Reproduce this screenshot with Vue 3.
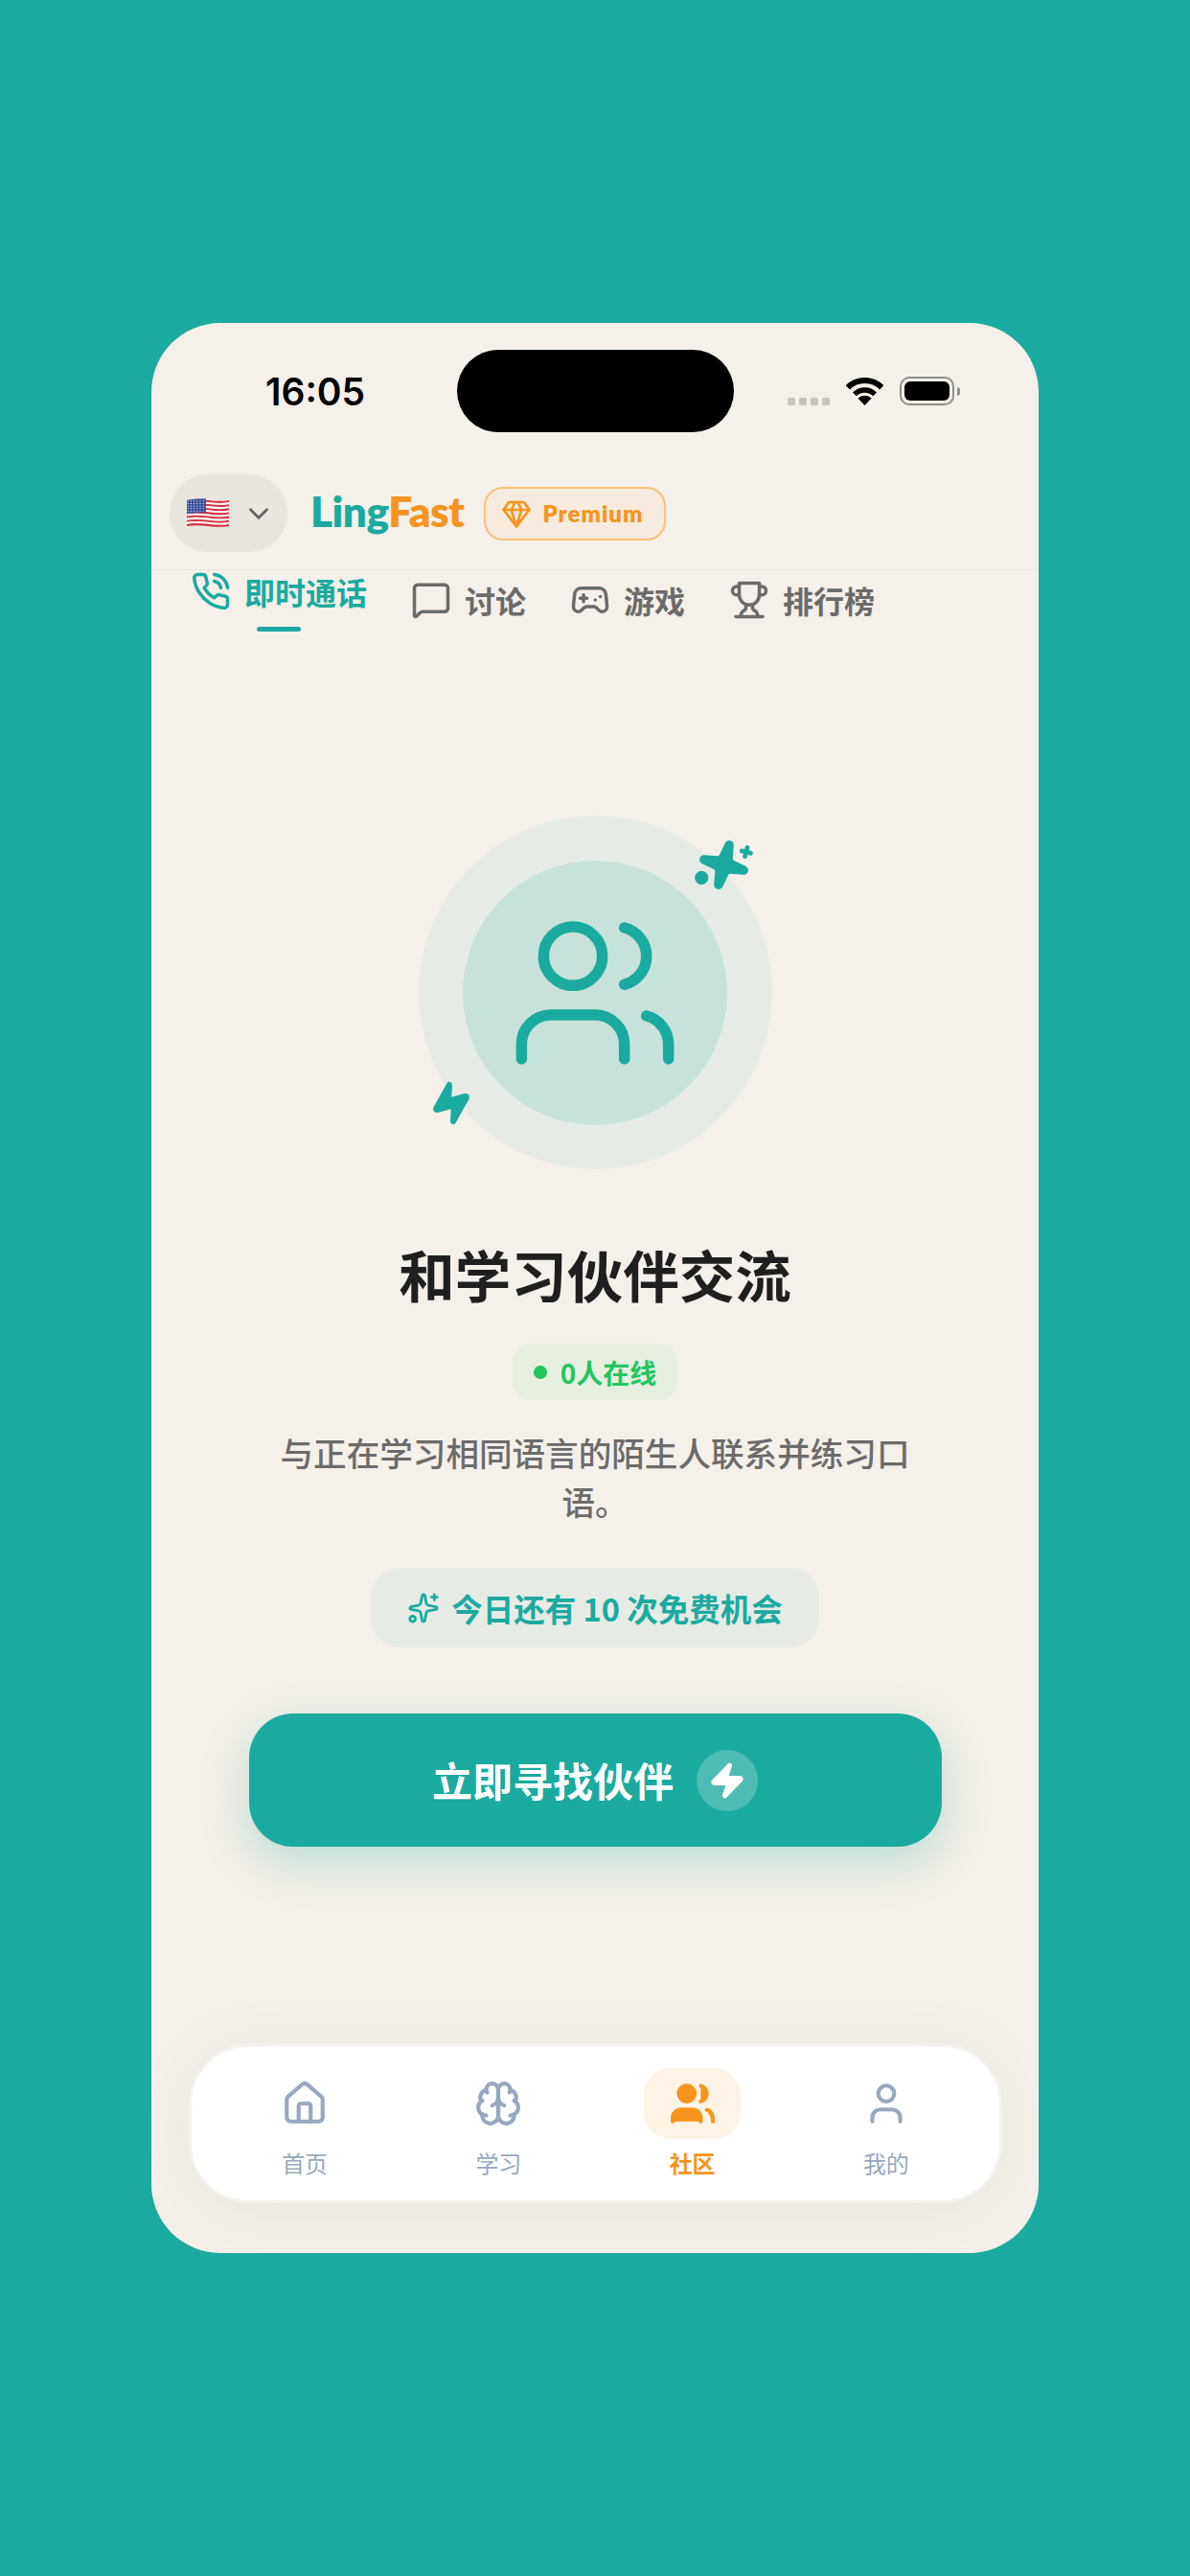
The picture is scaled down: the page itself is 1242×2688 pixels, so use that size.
<script setup>
// lucide paths, circles written as arcs so every icon is just a list of d strings
const icons = {
  phone: [
    'M22 16.92v3a2 2 0 0 1-2.18 2 19.79 19.79 0 0 1-8.63-3.07 19.5 19.5 0 0 1-6-6 19.79 19.79 0 0 1-3.07-8.67A2 2 0 0 1 4.11 2h3a2 2 0 0 1 2 1.72 12.84 12.84 0 0 0 .7 2.81 2 2 0 0 1-.45 2.11L8.09 9.91a16 16 0 0 0 6 6l1.27-1.27a2 2 0 0 1 2.11-.45 12.84 12.84 0 0 0 2.81.7A2 2 0 0 1 22 16.92z',
    'M14.05 2a9 9 0 0 1 8 7.94',
    'M14.05 6A5 5 0 0 1 18 10'
  ],
  message: [
    'M22 17a2 2 0 0 1-2 2H6.828a2 2 0 0 0-1.414.586l-2.202 2.202A.71.71 0 0 1 2 21.286V5a2 2 0 0 1 2-2h16a2 2 0 0 1 2 2z'
  ],
  gamepad: [
    'M6 11h4',
    'M8 9v4',
    'M15 12h.01',
    'M18 10h.01',
    'M17.32 5H6.68a4 4 0 0 0-3.978 3.59c-.006.052-.01.101-.017.152C2.604 9.416 2 14.456 2 16a3 3 0 0 0 3 3c1 0 1.5-.5 2-1l1.414-1.414A2 2 0 0 1 9.828 16h4.344a2 2 0 0 1 1.414.586L17 18c.5.5 1 1 2 1a3 3 0 0 0 3-3c0-1.545-.604-6.584-.685-7.258-.007-.05-.011-.1-.017-.151A4 4 0 0 0 17.32 5z'
  ],
  trophy: [
    'M6 9H4.5a2.5 2.5 0 0 1 0-5H6',
    'M18 9h1.5a2.5 2.5 0 0 0 0-5H18',
    'M4 22h16',
    'M10 14.66V17c0 .55-.47.98-.97 1.21C7.85 18.75 7 20.24 7 22',
    'M14 14.66V17c0 .55.47.98.97 1.21C16.15 18.75 17 20.24 17 22',
    'M18 2H6v7a6 6 0 0 0 12 0V2Z'
  ],
  home: [
    'M15 21v-8a1 1 0 0 0-1-1h-4a1 1 0 0 0-1 1v8',
    'M3 10a2 2 0 0 1 .709-1.528l7-5.999a2 2 0 0 1 2.582 0l7 5.999A2 2 0 0 1 21 10v9a2 2 0 0 1-2 2H5a2 2 0 0 1-2-2z'
  ],
  brain: [
    'M12 5a3 3 0 1 0-5.997.125 4 4 0 0 0-2.526 5.77 4 4 0 0 0 .556 6.588A4 4 0 1 0 12 18Z',
    'M12 5a3 3 0 1 1 5.997.125 4 4 0 0 1 2.526 5.77 4 4 0 0 1-.556 6.588A4 4 0 1 1 12 18Z',
    'M15 13a4.5 4.5 0 0 1-3-4 4.5 4.5 0 0 1-3 4',
    'M17.599 6.5a3 3 0 0 0 .399-1.375',
    'M6.003 5.125A3 3 0 0 0 6.401 6.5',
    'M3.477 10.896a4 4 0 0 1 .585-.396',
    'M19.938 10.5a4 4 0 0 1 .585.396',
    'M6 18a4 4 0 0 1-1.967-.516',
    'M19.967 17.484A4 4 0 0 1 18 18'
  ],
  users: [
    'M16 21v-2a4 4 0 0 0-4-4H6a4 4 0 0 0-4 4v2',
    'M5 7a4 4 0 1 0 8 0a4 4 0 1 0-8 0',
    'M22 21v-2a4 4 0 0 0-3-3.87',
    'M16 3.13a4 4 0 0 1 0 7.75'
  ],
  user: [
    'M19 21v-2a4 4 0 0 0-4-4H9a4 4 0 0 0-4 4v2',
    'M8 7a4 4 0 1 0 8 0a4 4 0 1 0-8 0'
  ],
  gem: ['M6 3h12l4 6-10 13L2 9Z', 'M11 3 8 9l4 13 4-13-3-6', 'M2 9h20'],
  chevron: ['m6 9 6 6 6-6'],
  sparkles: [
    'M11.017 2.814a1 1 0 0 1 1.966 0l1.051 5.558a2 2 0 0 0 1.594 1.594l5.558 1.051a1 1 0 0 1 0 1.966l-5.558 1.051a2 2 0 0 0-1.594 1.594l-1.051 5.558a1 1 0 0 1-1.966 0l-1.051-5.558a2 2 0 0 0-1.594-1.594l-5.558-1.051a1 1 0 0 1 0-1.966l5.558-1.051a2 2 0 0 0 1.594-1.594z',
    'M20 2v4',
    'M22 4h-4',
    'M2 20a2 2 0 1 0 4 0a2 2 0 1 0-4 0'
  ],
  zap: [
    'M4 14a1 1 0 0 1-.78-1.63l9.9-10.2a.5.5 0 0 1 .86.46l-1.92 6.02A1 1 0 0 0 13 10h7a1 1 0 0 1 .78 1.63l-9.9 10.2a.5.5 0 0 1-.86-.46l1.92-6.02A1 1 0 0 0 11 14z'
  ]
}

const tabs = [
  { label: '即时通话', icon: 'phone', active: true },
  { label: '讨论', icon: 'message' },
  { label: '游戏', icon: 'gamepad' },
  { label: '排行榜', icon: 'trophy' }
]

const navItems = [
  { label: '首页', icon: 'home' },
  { label: '学习', icon: 'brain' },
  { label: '社区', icon: 'users', active: true },
  { label: '我的', icon: 'user' }
]

// waving stripes for the flag
const stripeH = 27 / 13
const wave = (y, reverse) =>
  reverse
    ? `C29 ${y + 3} 15 ${y - 3} 0 ${y}`
    : `C15 ${y - 3} 29 ${y + 3} 44 ${y}`
const flagStripes = Array.from({ length: 13 }, (_, i) => {
  const y1 = 3 + i * stripeH
  const y2 = y1 + stripeH
  return {
    d: `M0 ${y1} ${wave(y1)} L44 ${y2} ${wave(y2, true)} Z`,
    fill: i % 2 ? '#f4f4f6' : '#d9303f'
  }
})
const cantonBottom = 3 + 7 * stripeH
const cantonPath = `M0 3 C7 1.4 13 1 20 1.6 L20 ${cantonBottom - 1.4} C13 ${cantonBottom - 2} 7 ${cantonBottom - 1.6} 0 ${cantonBottom} Z`
</script>

<template>
  <div class="page">
    <div class="phone">
      <div class="status">
        <span class="time">16:05</span>
        <div class="island"></div>
        <div class="status-icons">
          <div class="signal">
            <i v-for="n in 4" :key="n"></i>
          </div>
          <svg class="wifi" viewBox="0 0 39 29" fill="none" stroke="#000">
            <path d="M1.8 10.3A25 25 0 0 1 37.2 10.3" stroke-width="6" />
            <path d="M8.9 17.4A15 15 0 0 1 30.1 17.4" stroke-width="5.4" />
            <path d="M19.5 29 12.4 21.6A10 10 0 0 1 26.6 21.6Z" fill="#000" stroke="none" />
          </svg>
          <div class="battery"><div class="battery-fill"></div></div>
          <div class="battery-cap"></div>
        </div>
      </div>

      <header class="topbar">
        <div class="lang">
          <svg class="flag" viewBox="0 0 44 33">
            <defs>
              <pattern id="stars" width="3.2" height="2.6" patternUnits="userSpaceOnUse">
                <circle cx="1.2" cy="1.2" r="0.6" fill="#fff" />
              </pattern>
            </defs>
            <path v-for="(s, i) in flagStripes" :key="i" :d="s.d" :fill="s.fill" />
            <path :d="cantonPath" fill="#3c4f9c" />
            <path :d="cantonPath" fill="url(#stars)" />
          </svg>
          <svg class="icon chevron" viewBox="0 0 24 24">
            <path :d="icons.chevron[0]" />
          </svg>
        </div>
        <div class="logo"><span class="logo-a">Ling</span><span class="logo-b">Fast</span></div>
        <div class="premium">
          <svg class="icon gem" viewBox="0 0 24 24">
            <path v-for="d in icons.gem" :key="d" :d="d" />
          </svg>
          <span>Premium</span>
        </div>
      </header>

      <nav class="tabs">
        <div v-for="tab in tabs" :key="tab.label" class="tab" :class="{ active: tab.active }">
          <div class="tab-row">
            <svg class="icon tab-icon" viewBox="0 0 24 24">
              <path v-for="d in icons[tab.icon]" :key="d" :d="d" />
            </svg>
            <span>{{ tab.label }}</span>
          </div>
          <div v-if="tab.active" class="tab-line"></div>
        </div>
      </nav>

      <main class="content">
        <div class="hero">
          <div class="hero-inner">
            <svg class="icon hero-users" viewBox="0 0 24 24">
              <path v-for="d in icons.users" :key="d" :d="d" />
            </svg>
          </div>
          <svg class="icon hero-spark" viewBox="0 0 24 24">
            <path v-for="d in icons.sparkles" :key="d" :d="d" />
          </svg>
          <svg class="icon hero-zap" viewBox="0 0 24 24">
            <path :d="icons.zap[0]" />
          </svg>
        </div>

        <h1 class="title">和学习伙伴交流</h1>
        <div class="online"><i class="online-dot"></i><span>0人在线</span></div>
        <p class="desc">与正在学习相同语言的陌生人联系并练习口语。</p>
        <div class="free">
          <svg class="icon free-icon" viewBox="0 0 24 24">
            <path v-for="d in icons.sparkles" :key="d" :d="d" />
          </svg>
          <span>今日还有 10 次免费机会</span>
        </div>
        <button class="cta">
          <span class="cta-text">立即寻找伙伴</span>
          <span class="cta-badge">
            <svg class="icon cta-zap" viewBox="0 0 24 24">
              <path :d="icons.zap[0]" />
            </svg>
          </span>
        </button>
      </main>

      <footer class="bottom-nav">
        <div v-for="item in navItems" :key="item.label" class="nav-item" :class="{ active: item.active }">
          <div class="nav-icon-wrap">
            <svg class="icon nav-icon" viewBox="0 0 24 24">
              <path v-for="d in icons[item.icon]" :key="d" :d="d" />
            </svg>
          </div>
          <span class="nav-label">{{ item.label }}</span>
        </div>
      </footer>
    </div>
  </div>
</template>

<style scoped>
.page {
  width: 1242px;
  height: 2688px;
  background: #1baa9f;
  padding-top: 337px;
  box-sizing: border-box;
  display: flex;
  justify-content: center;
  font-family: "Noto Sans CJK SC", "Noto Sans", sans-serif;
}

.phone {
  width: 926px;
  height: 2014px;
  background: #f5f0e9;
  border-radius: 72px;
  overflow: hidden;
  display: flex;
  flex-direction: column;
}

.icon {
  fill: none;
  stroke: currentColor;
  stroke-width: 2;
  stroke-linecap: round;
  stroke-linejoin: round;
  display: block;
  flex-shrink: 0;
}

/* 状态栏 */
.status {
  display: grid;
  grid-template-columns: 319px 289px 1fr;
  align-items: center;
  padding-top: 28px;
}

.time {
  padding-left: 119px;
  font-family: Inter, sans-serif;
  font-size: 39px;
  font-weight: 600;
  color: #000;
}

.island {
  height: 86px;
  background: #000;
  border-radius: 43px;
}

.status-icons {
  display: flex;
  align-items: flex-end;
  padding-left: 56px;
}

.signal {
  display: flex;
  gap: 4px;
  margin-right: 17px;
}

.signal i {
  width: 8px;
  height: 8px;
  border-radius: 2px;
  background: #c6c4bd;
}

.wifi {
  width: 39px;
  height: 29px;
  margin-right: 17px;
}

.battery {
  width: 57px;
  height: 30px;
  box-sizing: border-box;
  border: 2px solid #8f8e8a;
  border-radius: 10px;
  padding: 3px;
}

.battery-fill {
  height: 100%;
  background: #000;
  border-radius: 6px;
}

.battery-cap {
  width: 3px;
  height: 9px;
  margin: 0 0 10px 3px;
  background: #8f8e8a;
  border-radius: 0 3px 3px 0;
}

/* 顶部栏 */
.topbar {
  display: flex;
  align-items: center;
  gap: 24px;
  margin-top: 44px;
  padding: 0 0 18px 19px;
  border-bottom: 1px solid #e9e5de;
}

.lang {
  width: 123px;
  height: 81px;
  border-radius: 40px;
  background: #e9e5df;
  display: flex;
  align-items: center;
  padding-left: 18px;
  box-sizing: border-box;
}

.flag {
  width: 44px;
  height: 33px;
}

.chevron {
  width: 34px;
  height: 34px;
  margin-left: 14px;
  color: #666;
}

.logo {
  margin: -5px -4px 0 0;
  font-family: Lato, sans-serif;
  font-size: 44px;
  font-weight: 800;
  letter-spacing: -0.5px;
}

.logo-a {
  color: #1baa9f;
}

.logo-b {
  color: #f7941d;
}

.premium {
  height: 56px;
  box-sizing: border-box;
  display: flex;
  align-items: center;
  gap: 12px;
  padding: 0 22px 0 16px;
  border: 2px solid #f9c27a;
  border-radius: 20px;
  background: #f6ebdd;
  color: #f7941d;
  font-family: Lato, sans-serif;
  font-size: 24px;
  font-weight: 800;
  letter-spacing: 1px;
}

.gem {
  width: 32px;
  height: 32px;
}

/* 标签栏 */
.tabs {
  display: flex;
  align-items: flex-start;
  gap: 46px;
  padding: 1px 0 0 41px;
}

.tab {
  margin-top: 9px;
  color: #6b6b6b;
  font-size: 32px;
  font-weight: 600;
}

.tab.active {
  margin-top: 0;
  color: #1baa9f;
  display: flex;
  flex-direction: column;
  align-items: center;
}

.tab-row {
  display: flex;
  align-items: center;
  gap: 14px;
  height: 42px;
}

.tab-icon {
  width: 42px;
  height: 42px;
}

.tab-line {
  width: 46px;
  height: 5px;
  margin-top: 16px;
  background: #1baa9f;
  border-radius: 3px;
}

/* 主内容 */
.content {
  display: flex;
  flex-direction: column;
  align-items: center;
  padding-top: 192px;
}

.hero {
  position: relative;
  width: 369px;
  height: 369px;
  border-radius: 50%;
  background: #e6ece5;
  display: flex;
  align-items: center;
  justify-content: center;
}

.hero-inner {
  width: 276px;
  height: 276px;
  border-radius: 50%;
  background: #c7e2db;
  display: flex;
  align-items: center;
  justify-content: center;
  color: #1baa9f;
}

.hero-users {
  width: 184px;
  height: 184px;
  stroke-width: 1.5;
}

.hero-spark {
  position: absolute;
  top: 23px;
  right: 22px;
  width: 57px;
  height: 57px;
  color: #1baa9f;
  fill: #1baa9f;
  transform: rotate(15deg);
}

.hero-zap {
  position: absolute;
  left: 10px;
  bottom: 45px;
  width: 48px;
  height: 48px;
  color: #1baa9f;
  fill: #1baa9f;
  transform: rotate(-15deg);
}

.title {
  margin: 69px 0 0;
  font-size: 58.5px;
  line-height: 80px;
  font-weight: 700;
  color: #1f1f1f;
}

.online {
  display: flex;
  align-items: center;
  gap: 14px;
  height: 59px;
  margin-top: 33px;
  padding: 0 22px;
  border-radius: 20px;
  background: #e6efe0;
  color: #22c55e;
  font-size: 28px;
  font-weight: 600;
}

.online-dot {
  width: 14px;
  height: 14px;
  border-radius: 50%;
  background: #22c55e;
}

.desc {
  width: 670px;
  margin: 29px 0 0;
  font-size: 34.6px;
  line-height: 51px;
  font-weight: 500;
  color: #6b6b6b;
  text-align: center;
}

.free {
  display: flex;
  align-items: center;
  gap: 12px;
  height: 83px;
  margin-top: 44px;
  padding: 0 38px;
  border-radius: 30px;
  background: #e6ece5;
  color: #1baa9f;
  font-size: 32.5px;
  font-weight: 600;
}

.free-icon {
  width: 34px;
  height: 34px;
}

.cta {
  width: 723px;
  height: 139px;
  margin-top: 69px;
  border: 0;
  border-radius: 46px;
  background: #1baa9f;
  color: #fff;
  font-family: inherit;
  font-size: 42px;
  font-weight: 700;
  display: flex;
  align-items: center;
  justify-content: center;
  gap: 24px;
  box-shadow: 0 16px 48px rgba(27, 170, 159, 0.28);
}

.cta-text {
  margin-top: -3px;
}

.cta-badge {
  width: 64px;
  height: 64px;
  border-radius: 50%;
  background: rgba(255, 255, 255, 0.22);
  display: flex;
  align-items: center;
  justify-content: center;
}

.cta-zap {
  width: 40px;
  height: 40px;
  fill: #fff;
}

/* 底部导航 */
.bottom-nav {
  width: 849px;
  height: 166px;
  box-sizing: border-box;
  margin: auto 0 52px 39px;
  border: 3px solid #f3f2ee;
  border-radius: 62px;
  background: #fff;
  box-shadow: 0 8px 70px rgba(90, 80, 50, 0.07);
  display: flex;
  padding: 22px 17px 0;
}

.nav-item {
  flex: 1;
  display: flex;
  flex-direction: column;
  align-items: center;
  color: #98a8bf;
}

.nav-item.active {
  color: #f7941d;
}

.nav-icon-wrap {
  width: 101px;
  height: 74px;
  border-radius: 28px;
  display: flex;
  align-items: center;
  justify-content: center;
}

.active .nav-icon-wrap {
  background: #fff3e6;
}

.nav-icon {
  width: 50px;
  height: 50px;
}

.active .nav-icon {
  fill: currentColor;
}

.nav-label {
  margin-top: 8px;
  font-size: 24px;
  line-height: 34px;
}

.active .nav-label {
  font-weight: 700;
}
</style>
